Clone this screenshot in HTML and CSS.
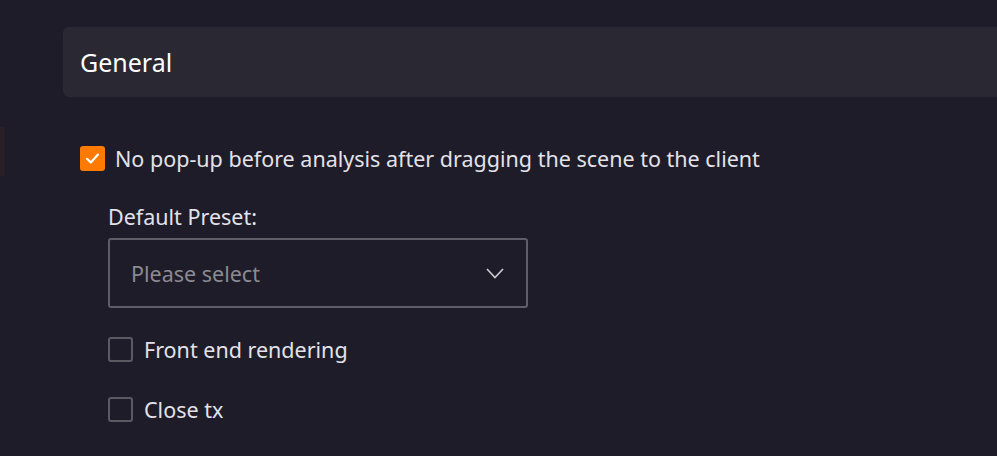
FILE: index.html
```html
<!DOCTYPE html>
<html>
<head>
<meta charset="utf-8">
<link rel="stylesheet" href="styles.css">
</head>
<body>
<div class="app">
  <aside class="sidebar">
    <div class="side-item"></div>
  </aside>
  <main class="main">
    <div class="section-head">General</div>
    <div class="settings">
      <label class="check-row">
        <span class="box checked">
          <svg viewBox="0 0 25 25" width="25" height="25"><path d="M7 12.8 L10.8 16.4 L18 8.6" fill="none" stroke="#fff" stroke-width="2.2" stroke-linecap="round" stroke-linejoin="round"/></svg>
        </span>
        <span class="check-text">No pop-up before analysis after dragging the scene to the client</span>
      </label>
      <div class="sub">
        <div class="field-label">Default Preset:</div>
        <div class="select">
          <span class="placeholder">Please select</span>
          <svg class="chev" viewBox="0 0 18 11" width="18" height="11"><path d="M1 1 L9 9.5 L17 1" fill="none" stroke="#c9c8ce" stroke-width="1.7"/></svg>
        </div>
        <label class="check-row small">
          <span class="box"></span>
          <span class="check-text">Front end rendering</span>
        </label>
        <label class="check-row small">
          <span class="box"></span>
          <span class="check-text">Close tx</span>
        </label>
      </div>
    </div>
  </main>
</div>
</body>
</html>
```
FILE: styles.css
```css
html, body {
  margin: 0;
  padding: 0;
  background: #1e1c28;
  height: 100%;
  overflow: hidden;
}
body {
  font-family: "Noto Sans", "Open Sans", sans-serif;
  color: #e6e5ea;
}
.app {
  display: flex;
  height: 456px;
}
.sidebar {
  width: 63px;
  flex: none;
  padding-top: 127px;
  box-sizing: border-box;
}
.side-item {
  width: 5px;
  height: 49px;
  background: #2b1f27;
}
.main {
  flex: 1;
  padding-top: 27px;
  min-width: 0;
}
.section-head {
  height: 70px;
  background: #2a2833;
  border-radius: 6px 0 0 6px;
  box-sizing: border-box;
  padding-left: 17px;
  display: flex;
  align-items: center;
  font-size: 25px;
  color: #ffffff;
  margin-right: -10px;
}
.settings {
  padding: 49px 0 0 17px;
}
.check-row {
  display: flex;
  align-items: center;
  gap: 10px;
  font-size: 21.5px;
  color: #e3e2e8;
  height: 25px;
}
.box {
  width: 25px;
  height: 25px;
  box-sizing: border-box;
  border-radius: 3px;
  border: 2px solid #5b5a63;
  flex: none;
  display: flex;
}
.box.checked {
  background: #ff7a00;
  border: none;
}
.box svg { display: block; }
.sub {
  padding-left: 28px;
  padding-top: 33px;
}
.field-label {
  font-size: 21.5px;
  color: #e3e2e8;
  line-height: 26px;
}
.select {
  margin-top: 8px;
  width: 420px;
  height: 70px;
  box-sizing: border-box;
  border: 2px solid #5f5e68;
  border-radius: 3px;
  display: flex;
  align-items: center;
  justify-content: space-between;
  padding: 0 22px 0 21px;
}
.placeholder {
  font-size: 21.5px;
  color: #8b8a92;
}
.chev { display: block; }
.check-row.small {
  margin-top: 29px;
  gap: 11px;
}
.check-row.small + .check-row.small {
  margin-top: 35px;
}
```
